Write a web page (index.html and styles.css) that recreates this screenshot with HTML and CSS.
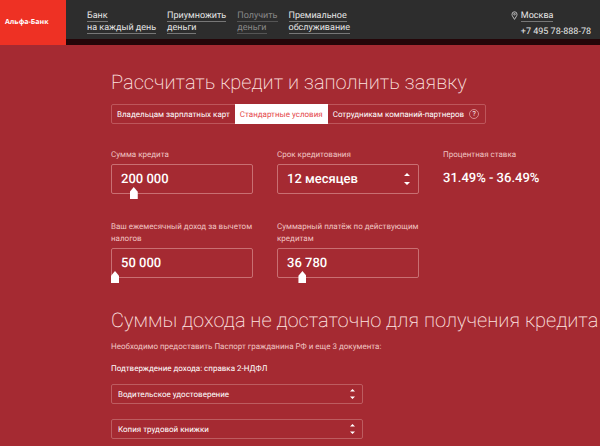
FILE: index.html
```html
<!DOCTYPE html>
<html lang="ru">
<head>
    <meta charset="UTF-8">
    <meta name="viewport" content="width=device-width, initial-scale=1.0">
    <title>Альфа-Банк | Рассчитать кредит</title>
    <link rel="stylesheet" href="styles.css">
</head>
<body>
    <header class="header">
        <a class="logo" href="/">Альфа-Банк</a>
        <div class="header-bar">
            <nav class="menu">
                <a href="/everyday"><span>Банк<br>на каждый день</span></a>
                <a href="/invest"><span>Приумножить<br>деньги</span></a>
                <a href="/get-money" class="current"><span>Получить<br>деньги</span></a>
                <a href="/premium"><span>Премиальное<br>обслуживание</span></a>
            </nav>
            <div class="contacts">
                <svg class="pin" viewBox="0 0 7 9" aria-hidden="true">
                    <path d="M3.5 8.4C2.6 6.6 1 5.2 1 3.3a2.5 2.5 0 0 1 5 0C6 5.2 4.4 6.6 3.5 8.4z"/>
                    <circle cx="3.5" cy="3.2" r="0.8"/>
                </svg>
                <a href="/city" class="city"><span>Москва</span></a>
                <a href="tel:+74957888878" class="phone">+7 495 78-888-78</a>
            </div>
        </div>
    </header>

    <main class="content">
        <h1>Рассчитать кредит и заполнить заявку</h1>

        <div class="tabs">
            <button type="button">Владельцам зарплатных карт</button>
            <button type="button" class="active">Стандартные условия</button>
            <button type="button">Сотрудникам компаний-партнеров</button>
            <button type="button" class="help" aria-label="Подсказка">?</button>
        </div>

        <form class="calc">
            <div class="field">
                <label for="amount">Сумма кредита</label>
                <div class="control">
                    <input type="text" id="amount" value="200 000">
                    <input type="range" class="slider" min="0" max="100" value="14" aria-label="Сумма кредита">
                </div>
            </div>
            <div class="field">
                <label for="term">Срок кредитования</label>
                <div class="control">
                    <select id="term">
                        <option>12 месяцев</option>
                        <option>24 месяца</option>
                        <option>36 месяцев</option>
                    </select>
                    <svg class="arrows" viewBox="0 0 6 12" aria-hidden="true"><path d="M3 0l3 3H0zM3 12l3-3H0z"/></svg>
                </div>
            </div>
            <div class="field">
                <span class="label">Процентная ставка</span>
                <output class="rate">31.49% - 36.49%</output>
            </div>
            <div class="field">
                <label for="income">Ваш ежемесячный доход за вычетом налогов</label>
                <div class="control">
                    <input type="text" id="income" value="50 000">
                    <input type="range" class="slider" min="0" max="100" value="0" aria-label="Ежемесячный доход">
                </div>
            </div>
            <div class="field">
                <label for="payment">Суммарный платёж по действующим кредитам</label>
                <div class="control">
                    <input type="text" id="payment" value="36 780">
                    <input type="range" class="slider" min="0" max="100" value="16" aria-label="Суммарный платёж">
                </div>
            </div>
        </form>

        <section class="docs">
            <h2>Суммы дохода не достаточно для получения кредита</h2>
            <p class="note">Необходимо предоставить Паспорт гражданина РФ и еще 3 документа:</p>
            <p class="proof">Подтверждение дохода: справка 2-НДФЛ</p>
            <div class="control small">
                <select aria-label="Второй документ">
                    <option>Водительское удостоверение</option>
                    <option>Загранпаспорт</option>
                </select>
                <svg class="arrows" viewBox="0 0 6 12" aria-hidden="true"><path d="M3 0l3 3H0zM3 12l3-3H0z"/></svg>
            </div>
            <div class="control small">
                <select aria-label="Третий документ">
                    <option>Копия трудовой книжки</option>
                    <option>Полис ДМС</option>
                </select>
                <svg class="arrows" viewBox="0 0 6 12" aria-hidden="true"><path d="M3 0l3 3H0zM3 12l3-3H0z"/></svg>
            </div>
        </section>
    </main>
</body>
</html>
```

FILE: styles.css
```css
* {
    box-sizing: border-box;
}
body {
    margin: 0;
    font-family: Roboto, "Liberation Sans", sans-serif;
    font-size: 8px;
    line-height: 12px;
    color: #fff;
    background-color: #a52a32;
    overflow-x: hidden;
    text-rendering: geometricPrecision;
}
a {
    color: inherit;
    text-decoration: none;
}
input, select, button {
    font-family: inherit;
    color: inherit;
    text-rendering: inherit;
}

/* Header */
.header {
    display: flex;
    height: 45px;
}
.logo {
    display: flex;
    align-items: center;
    width: 66px;
    padding-left: 5px;
    background-color: #ee3124;
    font-family: "Open Sans", sans-serif;
    font-size: 7px;
    font-weight: bold;
    white-space: nowrap;
}
.header-bar {
    flex: 1;
    display: flex;
    justify-content: space-between;
    padding: 10px 9px 0 21px;
    background-color: #2d2d2d;
    border-bottom: 6px solid #240609;
    font-size: 9px;
    color: #e6e6e6;
}
.menu {
    display: flex;
    gap: 11px;
    white-space: nowrap;
}
.menu span, .city span {
    border-bottom: 1px solid #777;
}
.menu .current {
    color: #888;
}
.menu .current span {
    border-color: #555;
}
.contacts {
    display: grid;
    grid-template-columns: 7px auto;
    column-gap: 3px;
    row-gap: 3px;
}
.pin {
    width: 7px;
    height: 9px;
    margin-top: 1px;
    fill: none;
    stroke: #bbb;
}
.phone {
    grid-column: 2;
}

/* Content */
.content {
    padding: 24px 0 6px 111px;
}
h1, h2 {
    margin: 0;
    font-weight: 200;
    font-size: 20px;
    line-height: 26px;
    color: #ffe6e2;
    white-space: nowrap;
}
.tabs {
    display: inline-flex;
    align-items: center;
    height: 20px;
    margin-top: 9px;
    border: 1px solid #bd565b;
    border-radius: 2px;
    white-space: nowrap;
}
.tabs button {
    height: 20px;
    padding: 0 5px;
    border: none;
    background: none;
    font-size: 8px;
}
.tabs .active {
    background-color: #fff;
    color: #e5484a;
}
.tabs .help {
    width: 10px;
    height: 10px;
    margin: 0 6px 0 0;
    padding: 0;
    border: 1px solid #d88c8e;
    border-radius: 50%;
    font-size: 7px;
    line-height: 8px;
}

/* Calculator */
.calc {
    display: grid;
    grid-template-columns: repeat(3, 1fr);
    column-gap: 24px;
    row-gap: 27px;
    max-width: 474px;
    margin-top: 25px;
}
.field label, .field .label {
    display: block;
    margin-bottom: 3px;
    color: #f0c4c2;
}
.control {
    position: relative;
}
.control input[type="text"], .control select {
    display: block;
    width: 100%;
    height: 30px;
    padding: 0 9px;
    border: 1px solid #c96f72;
    border-radius: 2px;
    background: none;
    font-size: 13px;
    font-weight: 500;
    appearance: none;
}
.control option {
    color: #333;
}
.arrows {
    position: absolute;
    top: 9px;
    right: 9px;
    width: 6px;
    height: 12px;
    fill: #fff;
    pointer-events: none;
}
.rate {
    display: block;
    font-size: 13px;
    font-weight: 500;
    line-height: 30px;
}

/* The handle sits on the bottom border of the field */
.slider {
    position: absolute;
    left: 0;
    bottom: -5px;
    width: 100%;
    height: 12px;
    margin: 0;
    background: none;
    appearance: none;
}
.slider::-webkit-slider-thumb {
    appearance: none;
    width: 8px;
    height: 12px;
    background-color: #fff;
    clip-path: polygon(50% 0, 100% 40%, 100% 100%, 0 100%, 0 40%);
}

/* Documents */
.docs {
    margin-top: 29px;
}
.docs p {
    margin: 0;
}
.docs .note {
    margin-top: 8px;
    color: #f0c4c2;
}
.docs .proof {
    margin-top: 10px;
    margin-bottom: 9px;
}
.small {
    max-width: 252px;
    margin-bottom: 15px;
}
.small:last-child {
    margin-bottom: 0;
}
.docs .small select {
    height: 20px;
    padding: 0 6px;
    border-color: #bd5c60;
    font-size: 8px;
    font-weight: 400;
}
.small .arrows {
    top: 5px;
    right: 8px;
    width: 5px;
    height: 10px;
}
```
